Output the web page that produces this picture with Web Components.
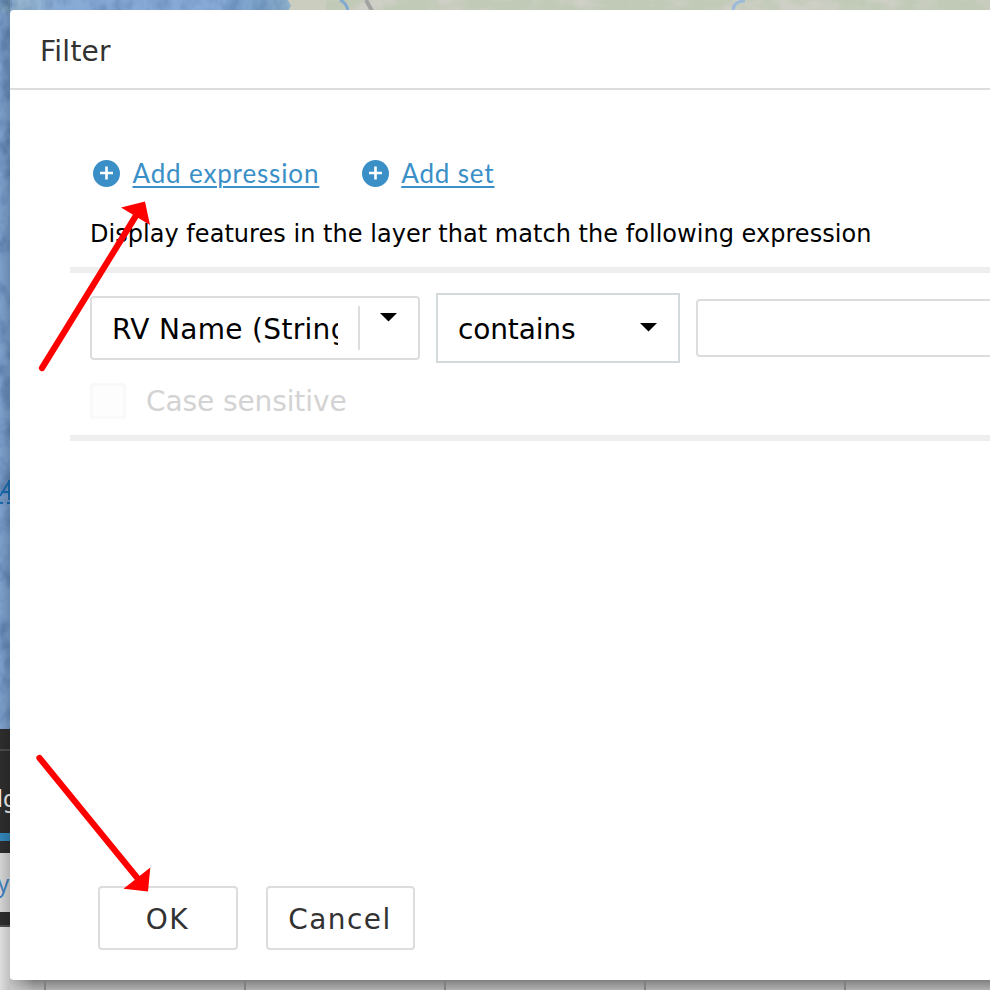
<!DOCTYPE html>
<html lang="en">
<head>
<meta charset="utf-8">
<title>Filter</title>
<style>
html,body{margin:0;height:100%;overflow:hidden}
body{font-family:"DejaVu Sans",Verdana,sans-serif;color:#000}
</style>
</head>
<body>
<filter-page></filter-page>
<script>
function define(name, html){
  const t=document.createElement('template');
  t.innerHTML=html;
  customElements.define(name, class extends HTMLElement{
    constructor(){super();this.attachShadow({mode:'open'}).append(t.content.cloneNode(true));}
  });
}

define('map-backdrop', `
<style>:host{display:block;position:absolute;inset:0;overflow:hidden}svg{display:block}</style>
<svg width="990" height="990" viewBox="0 0 990 990">
<defs>
<filter id="relief" x="0" y="0" width="100%" height="100%" color-interpolation-filters="sRGB">
<feTurbulence type="fractalNoise" baseFrequency=".07 .05" numOctaves="3" seed="7"/>
<feColorMatrix values="0 0 0 0 .25  0 0 0 0 .39  0 0 0 0 .58  2.6 0 0 0 -1.05"/>
</filter>
<filter id="land" x="0" y="0" width="100%" height="100%" color-interpolation-filters="sRGB">
<feTurbulence type="fractalNoise" baseFrequency=".03 .06" numOctaves="3" seed="3"/>
<feColorMatrix values="0 0 0 0 .83  0 0 0 0 .82  0 0 0 0 .80  3 0 0 0 -1.2"/>
</filter>
<linearGradient id="coast" x1="0" x2="320" y1="0" y2="0" gradientUnits="userSpaceOnUse">
<stop offset="0" stop-color="#7fa3c4"/><stop offset=".08" stop-color="#9cbad2"/><stop offset=".18" stop-color="#88abd5"/>
<stop offset=".65" stop-color="#86a9d6"/><stop offset=".8" stop-color="#7fa5cc"/><stop offset="1" stop-color="#9dbccb"/></linearGradient>
<linearGradient id="edge" x1="0" x2="10" y1="0" y2="0" gradientUnits="userSpaceOnUse">
<stop offset="0" stop-color="#000" stop-opacity="0"/><stop offset="1" stop-color="#000" stop-opacity=".14"/></linearGradient>
<linearGradient id="under" x1="0" x2="0" y1="980" y2="990" gradientUnits="userSpaceOnUse">
<stop offset="0" stop-color="#808080"/><stop offset="1" stop-color="#b0b0b0"/></linearGradient>
<linearGradient id="corner" x1="10" x2="34" y1="0" y2="0" gradientUnits="userSpaceOnUse">
<stop offset="0" stop-color="#d0d0d0"/><stop offset="1" stop-color="#d0d0d0" stop-opacity="0"/></linearGradient>
</defs>
<rect width="12" height="730" fill="#7c9fcb"/>
<rect width="320" height="12" fill="url(#coast)"/>
<rect width="12" height="730" filter="url(#relief)" opacity=".45"/>
<rect width="290" height="12" filter="url(#relief)" opacity=".3"/>
<rect x="318" width="672" height="12" fill="#c0cab6"/>
<rect x="318" width="672" height="12" filter="url(#land)" opacity=".8"/>
<path d="M288 0h38v11h-38l3-5z" fill="#cbcdbf"/>
<path d="M340 0q7 3 8 11" stroke="#83a9d1" stroke-width="3" fill="none"/>
<path d="M366 0l6 11" stroke="#a2a2a2" stroke-width="4"/>
<path d="M733 11q0-10 12-10" stroke="#9dbbd8" stroke-width="3" fill="none"/>
<path d="M0 496L10 480M1 492h10M9 480v20M0 503h3M7 503h4" stroke="#1768ad" stroke-width="1.8" fill="none"/>
<rect y="729" width="12" height="261" fill="#2d2d2d"/>
<rect y="749" width="12" height="2" fill="#4a4a4a"/>
<text x="-3" y="807" font-family="Noto Sans" font-size="23" fill="#eee">lg</text>
<rect y="833" width="12" height="8" fill="#3285b8"/>
<rect y="853" width="12" height="59" fill="#d2d2d2"/>
<text x="-2.500" y="892" font-family="Noto Sans" font-size="23" fill="#3f7fbd">y</text>
<rect y="925" width="12" height="2" fill="#505050"/>
<rect y="927" width="12" height="63" fill="#dedede"/>
<rect width="10" height="990" fill="url(#edge)"/>
<rect x="10" y="979" width="980" height="11" fill="url(#under)"/>
<rect x="10" y="979" width="24" height="11" fill="url(#corner)" opacity=".75"/>
<path d="M45 980v10M245 980v10M445 980v10M645 980v10M845 980v10" stroke="#808080" stroke-width="2"/>
</svg>`);

define('add-link', `
<style>
:host{display:flex;align-items:center;gap:12.5px;color:#3b8fc7;font:400 26px/30px Lato,sans-serif}
svg{display:block}
span{letter-spacing:.85px;text-decoration:underline;text-decoration-thickness:2px;text-underline-offset:3px;white-space:nowrap}
</style>
<svg width="27" height="27" viewBox="0 0 27 27"><circle cx="13.5" cy="13.5" r="13.5" fill="#3b8fc7"/><path d="M7 13h13M13.5 6.500v13" stroke="#fff" stroke-width="2.6"/></svg>
<span><slot></slot></span>`);

define('drop-arrow', `
<style>:host{display:block}svg{display:block}</style>
<svg width="17" height="9" viewBox="0 0 17 9"><path d="M0 0h17L8.5 8.5z" fill="#000"/></svg>`);

define('field-combo', `
<style>
:host{display:flex;box-sizing:border-box;width:330px;height:64px;border:2px solid #ddd;border-radius:4px;padding:8px 20px;font-size:28px}
.v{flex:none;width:226px;overflow:hidden;white-space:nowrap;letter-spacing:.32px;line-height:48px}
.a{margin-left:20px;border-left:2px solid #ddd;height:44px;padding:7px 0 0 20px;box-sizing:border-box}
</style><div class="v"><slot></slot></div><div class="a"><drop-arrow></drop-arrow></div>`);

define('operator-select', `
<style>
:host{display:flex;box-sizing:border-box;width:244px;height:70px;border:2px solid #d4d9dc;padding:0 21px 0 20px;align-items:center;justify-content:space-between;font-size:28px;line-height:36px}
span{letter-spacing:-.15px;padding-top:4px}
drop-arrow{padding-bottom:1px}
</style><span><slot></slot></span><drop-arrow></drop-arrow>`);

define('value-input', `<style>:host{display:block;box-sizing:border-box;width:400px;height:58px;border:2px solid #ddd;border-radius:4px}</style>`);

define('check-option', `
<style>:host{display:flex;align-items:center;gap:20px;height:36px;font-size:28px;line-height:36px;color:#d3d3d3}
i{box-sizing:border-box;width:36px;height:36px;border:3px solid #f9f9f9;border-radius:3px;background:#fdfdfd}
span{letter-spacing:-.1px;padding-top:2px}</style><i></i><span><slot></slot></span>`);

define('dialog-button', `
<style>:host{display:flex;align-items:center;justify-content:center;box-sizing:border-box;height:64px;border:2px solid #ddd;border-radius:4px;font-size:28px;color:#323232}
span{letter-spacing:1.45px;padding:2px 1px 0 0}</style><span><slot></slot></span>`);

define('expression-row', `
<style>:host{display:block;box-sizing:border-box;margin-left:60px;height:174px;border:solid #eee;border-width:6px 0;padding:20px 0 0 20px}
.r{display:flex;align-items:center;gap:16px;height:70px;margin-bottom:20px}</style>
<div class="r"><slot name="fields"></slot></div><slot></slot>`);

define('filter-dialog', `
<style>
:host{display:flex;flex-direction:column;box-sizing:border-box;position:relative;width:1100px;height:970px;background:#fff;border-radius:4px}
header{box-sizing:border-box;height:80px;border-bottom:2px solid #ddd;padding:4px 30px 0;font-size:28px;line-height:76px;color:#323232;letter-spacing:.25px}
.links{display:flex;gap:42.5px;padding:68px 0 0 83px;height:30px}
p{margin:31px 0 0 80px;font-size:24px;line-height:30px;height:48px;white-space:nowrap;letter-spacing:.035px}
main{flex:1}
footer{display:flex;gap:28px;padding:0 0 30px 88px}
</style>
<header>Filter</header>
<main>
<div class="links"><add-link>Add expression</add-link><add-link>Add set</add-link></div>
<p>Display features in the layer that match the following expression</p>
<expression-row>
<field-combo slot="fields">RV Name (String)</field-combo>
<operator-select slot="fields">contains</operator-select>
<value-input slot="fields"></value-input>
<check-option>Case sensitive</check-option>
</expression-row>
</main>
<footer><dialog-button style="width:140px">OK</dialog-button><dialog-button style="width:149px">Cancel</dialog-button></footer>`);

define('callout-arrows', `
<style>:host{display:block;position:absolute;inset:0;pointer-events:none}svg{display:block}</style>
<svg width="990" height="990" viewBox="0 0 990 990" fill="#f00" stroke="none">
<path d="M42 368L137 214M39.500 758L139 880" stroke="#f00" stroke-width="6.200" stroke-linecap="round"/>
<path d="M145 201.500L150 225L121 207.500zM150.300 867.500L148 891.500L123.500 888.700z"/>
</svg>`);

define('filter-page', `
<style>:host{display:block;box-sizing:border-box;position:relative;width:990px;height:990px;padding:10px;overflow:hidden}</style>
<map-backdrop></map-backdrop><filter-dialog></filter-dialog><callout-arrows></callout-arrows>`);
</script>
</body>
</html>
